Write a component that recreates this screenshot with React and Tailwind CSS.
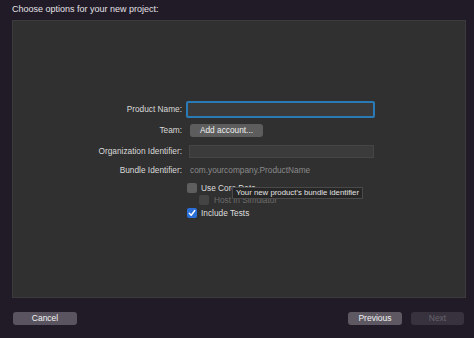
import React from 'react';

const font = { fontFamily: '"Liberation Sans", Arial, sans-serif' };

function Checkbox({ checked, disabled }) {
  if (checked) {
    return (
      <div className="w-[10px] h-[10px] rounded-[2px] bg-[#2a6ed8] flex items-center justify-center">
        <svg width="8" height="8" viewBox="0 0 8 8" fill="none">
          <path d="M1.3 4.2 L3.2 6.2 L6.8 1.5" stroke="#ffffff" strokeWidth="1.4" strokeLinecap="round" strokeLinejoin="round" />
        </svg>
      </div>
    );
  }
  return (
    <div className={`w-[10px] h-[10px] rounded-[2px] ${disabled ? 'bg-[#444444]' : 'bg-[#5e5e5e]'}`} />
  );
}

function Row({ label, className, children }) {
  return (
    <div className={`flex items-center ${className}`}>
      <div className="w-[169px] text-right text-[8.3px] text-[#d9d9d9] leading-none">{label}</div>
      <div className="ml-[6px] flex items-center">{children}</div>
    </div>
  );
}

export default function App() {
  return (
    <div className="w-[474px] h-[338px] bg-[#211b27] overflow-hidden" style={font}>
      <div className="pl-[12px] pt-[4px] text-[9px] leading-[11px] text-[#e4e2e6]">
        Choose options for your new project:
      </div>

      <div className="relative ml-[12px] mt-[5px] w-[454px] h-[278px] bg-[#303030] border border-[#3b3a3d]">
        <div className="pt-[80px]">
          <Row label="Product Name:" className="h-[17px]">
            <div className="-ml-[2px] w-[189px] h-[17px] border-2 border-[#2b79b5] rounded-[2px] bg-[#3a3a3a]" />
          </Row>
          <Row label="Team:" className="mt-[6px] h-[13px]">
            <div className="ml-[2px] w-[73px] h-[13px] rounded-[3px] bg-[#5d5d5d] text-[8.3px] leading-[13px] text-[#f0f0f0] text-center">
              Add account...
            </div>
          </Row>
          <Row label="Organization Identifier:" className="mt-[8px] h-[13px]">
            <div className="ml-[1px] w-[185px] h-[13px] bg-[#3b3b3b] border border-[#454545]" />
          </Row>
          <Row label="Bundle Identifier:" className="mt-[6px] h-[12px]">
            <div className="ml-[2px] text-[8.3px] leading-none text-[#8a8a8a]">com.yourcompany.ProductName</div>
          </Row>

          <div className="ml-[174px] mt-[7px] flex items-center h-[10px]">
            <Checkbox />
            <span className="ml-[4px] text-[8.3px] leading-none text-[#dedede]">Use Core Data</span>
          </div>
          <div className="ml-[186px] mt-[2px] flex items-center h-[10px]">
            <Checkbox disabled />
            <span className="ml-[5px] text-[8.3px] leading-none text-[#6c6c6c]">Host in Simulator</span>
          </div>
          <div className="ml-[174px] mt-[3px] flex items-center h-[10px]">
            <Checkbox checked />
            <span className="ml-[4px] text-[8.3px] leading-none text-[#dedede]">Include Tests</span>
          </div>
        </div>

        <div className="absolute left-[219px] top-[166px] h-[12px] px-[3px] bg-[#262626] border border-[#4a4a4a] text-[7.8px] leading-[10px] text-[#e2e2e2] whitespace-nowrap">
          Your new product's bundle identifier
        </div>
      </div>

      <div className="mt-[14px] px-[13px] flex items-center">
        <div className="w-[64px] h-[13px] rounded-[3px] bg-[#59545f] text-[8.5px] leading-[13px] text-[#f2f2f2] text-center">
          Cancel
        </div>
        <div className="ml-auto w-[54px] h-[13px] rounded-[3px] bg-[#5d5862] text-[8.5px] leading-[13px] text-[#f2f2f2] text-center">
          Previous
        </div>
        <div className="ml-[9px] mr-[-3px] w-[53px] h-[13px] rounded-[3px] bg-[#37323d] text-[8.5px] leading-[13px] text-[#68636d] text-center">
          Next
        </div>
      </div>
    </div>
  );
}
